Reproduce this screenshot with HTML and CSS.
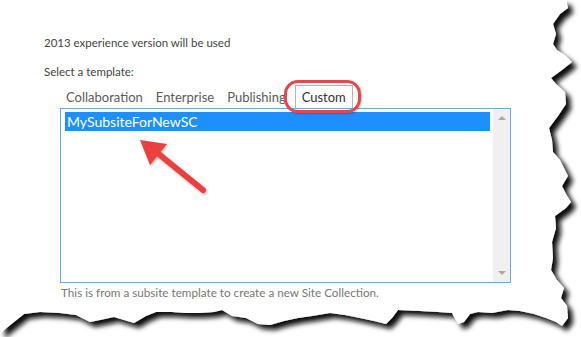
FILE: index.html
```html
<!DOCTYPE html>
<html lang="en">
<head>
    <meta charset="UTF-8">
    <title>Select a template</title>
    <link rel="stylesheet" href="styles.css">
</head>
<body>

<div class="page">
    <p class="line version">2013 experience version will be used</p>
    <p class="line label">Select a template:</p>

    <div class="picker">
        <div class="tabs">
            <span class="tab">Collaboration</span>
            <span class="tab">Enterprise</span>
            <span class="tab">Publishing</span>
            <span class="tab active">Custom</span>
        </div>
        <div class="listbox">
            <div class="items">
                <div class="item selected">MySubsiteForNewSC</div>
            </div>
            <div class="scrollbar">
                <span class="arrow up"></span>
                <span class="arrow down"></span>
            </div>
        </div>
        <p class="hint">This is from a subsite template to create a new Site Collection.</p>
    </div>

    <!-- callouts drawn over the screenshot -->
    <div class="callout-ring"></div>
    <svg class="callout-arrow" width="90" height="70" viewBox="0 0 90 70">
        <defs>
            <filter id="arrowShadow" x="-20%" y="-20%" width="140%" height="140%">
                <feDropShadow dx="1" dy="1.5" stdDeviation="1" flood-color="#000" flood-opacity="0.3"/>
            </filter>
        </defs>
        <g filter="url(#arrowShadow)">
            <line x1="68" y1="54" x2="20" y2="15" stroke="#e9403f" stroke-width="6" stroke-linecap="round"/>
            <polygon points="5,4 32,8 15,29" fill="#e9403f"/>
        </g>
    </svg>

    <!-- torn paper edge -->
    <svg class="torn" width="581" height="337" viewBox="0 0 581 337">
        <defs>
            <filter id="tornShadow" x="-5%" y="-5%" width="110%" height="110%">
                <feDropShadow dx="5" dy="5" stdDeviation="2.5" flood-color="#111" flood-opacity="1"/>
            </filter>
        </defs>
        <path filter="url(#tornShadow)" fill="#fff"
              d="M0,0 L566,0 L568,8 L560,14 L553,24 L556,34 L553,44 L557,50 L566,56 L572,62 L562,70 L551,78 L556,84 L565,92 L566,104 L558,116 L549,128 L552,140 L553,152 L560,160 L564,168 L568,176 L562,186 L566,194 L571,202 L566,208 L555,216 L556,228 L552,242 L553,258 L551,270 L557,280 L564,288 L561,298 L567,306 L568,318 L562,326 L556,322 L546,318 L534,314 L520,311 L508,310 L492,313 L478,312 L470,314 L464,322 L458,324 L452,313 L438,312 L420,311 L398,310 L392,318 L386,324 L374,321 L360,318 L345,315 L330,313 L312,316 L298,318 L284,321 L270,325 L258,324 L246,318 L232,316 L222,310 L214,312 L200,313 L186,313 L172,312 L156,312 L146,316 L134,323 L124,320 L114,317 L100,320 L90,322 L76,315 L60,313 L40,312 L24,314 L14,322 L4,330 L0,333 Z"/>
    </svg>
</div>

</body>
</html>
```

FILE: styles.css
```css
body {
    margin: 0;
    background: #fff;
    font-family: Lato, "Noto Sans", sans-serif;
    color: #444;
}
.page {
    position: relative;
    width: 581px;
    height: 337px;
    padding: 34px 0 0 44px;
    box-sizing: border-box;
    overflow: hidden;
}
.line {
    margin: 0 0 12px;
    font-size: 11.5px;
    line-height: 17px;
}
.line.label {
    margin-bottom: 5px;
}
.picker {
    margin-left: 16px;
    width: 451px;
}
.tabs {
    display: flex;
    align-items: flex-end;
    padding-left: 2px;
    height: 23px;
}
.tab {
    font-size: 13px;
    line-height: 20px;
    padding: 0 7px 1px 4px;
    margin-right: 2px;
    color: #5a5a5a;
}
.tab.active {
    color: #333;
    border: 1px solid #b4b4b4;
    border-bottom: none;
    padding: 1px 6px 1px 6px;
    margin-left: 0;
}
.listbox {
    display: flex;
    height: 175px;
    border: 1px solid #6aa8f0;
    box-sizing: border-box;
    background: #fff;
}
.items {
    flex: 1;
    padding: 3px 3px 0 4px;
}
.item {
    font-size: 14px;
    line-height: 19px;
    padding-left: 2px;
    color: #222;
}
.item.selected {
    background: #1e8fff;
    color: #fff;
}
.scrollbar {
    width: 17px;
    background: #f0f0f0;
    display: flex;
    flex-direction: column;
    justify-content: space-between;
    align-items: center;
    padding: 7px 0 7px;
}
.arrow {
    width: 0;
    height: 0;
    border-left: 4px solid transparent;
    border-right: 4px solid transparent;
}
.arrow.up {
    border-bottom: 4px solid #a8a8a8;
}
.arrow.down {
    border-top: 4px solid #a8a8a8;
}
.hint {
    margin: 2px 0 0 1px;
    font-size: 11.7px;
    line-height: 15px;
    color: #777;
}
.callout-ring {
    position: absolute;
    left: 284px;
    top: 80px;
    width: 77px;
    height: 33px;
    box-sizing: border-box;
    border: 3px solid #e5474a;
    border-radius: 14px;
    box-shadow: 1px 1px 2px rgba(0, 0, 0, 0.25);
    z-index: 2;
}
.callout-arrow {
    position: absolute;
    left: 135px;
    top: 136px;
    z-index: 2;
}
.torn {
    position: absolute;
    left: 0;
    top: 0;
    z-index: 0;
}
.line, .picker {
    position: relative;
    z-index: 1;
}
```
